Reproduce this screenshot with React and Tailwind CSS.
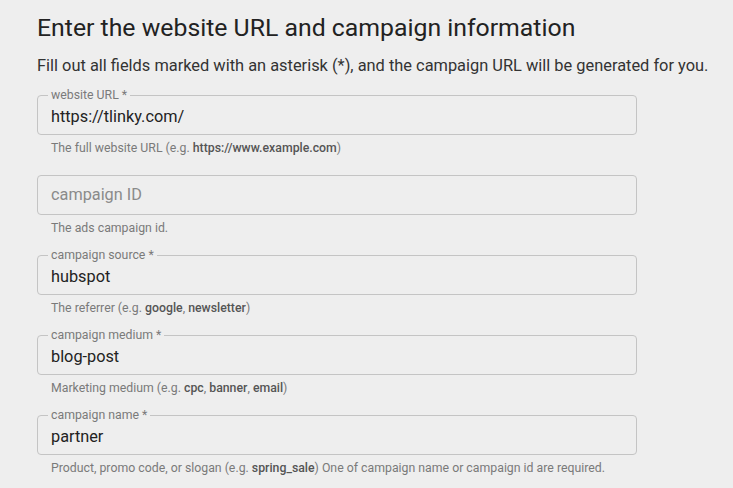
import React from "react";

function Field({ label, value, placeholder, helper }) {
  return (
    <div className="flex flex-col h-[80px]">
      <div className="relative h-[40px] w-[600px] rounded-[4px] border border-[#c4c4c4] flex items-center pl-[13px]">
        {label && (
          <span className="absolute left-[10px] top-[-8px] px-[3px] bg-[#eeeeee] text-[12.3px] leading-[14px] text-[#7a7a7a]">
            {label}
          </span>
        )}
        {value ? (
          <span className="text-[16.3px] leading-[20px] text-[#222222] pt-[4px]">{value}</span>
        ) : (
          <span className="text-[16.3px] leading-[20px] text-[#8a8a8a]">{placeholder}</span>
        )}
      </div>
      <div className="pl-[14px] mt-[4px] text-[12.3px] leading-[18px] text-[#7a7a7a]">{helper}</div>
    </div>
  );
}

const B = ({ children }) => <span className="font-medium text-[#555555]">{children}</span>;

export default function App() {
  return (
    <div
      className="w-[733px] h-[488px] bg-[#eeeeee] overflow-hidden pl-[37px]"
      style={{ fontFamily: "Roboto, 'Noto Sans', sans-serif" }}
    >
      <h1 className="mt-[12px] text-[24.8px] leading-[32px] text-[#222222] font-normal">
        Enter the website URL and campaign information
      </h1>
      <p className="mt-[10px] text-[16.4px] leading-[24px] text-[#333333]">
        Fill out all fields marked with an asterisk (*), and the campaign URL will be generated for you.
      </p>
      <div className="mt-[17px] flex flex-col">
        <Field
          label="website URL *"
          value="https://tlinky.com/"
          helper={<>The full website URL (e.g. <B>https://www.example.com</B>)</>}
        />
        <Field placeholder="campaign ID" helper="The ads campaign id." />
        <Field
          label="campaign source *"
          value="hubspot"
          helper={<>The referrer (e.g. <B>google</B>, <B>newsletter</B>)</>}
        />
        <Field
          label="campaign medium *"
          value="blog-post"
          helper={<>Marketing medium (e.g. <B>cpc</B>, <B>banner</B>, <B>email</B>)</>}
        />
        <Field
          label="campaign name *"
          value="partner"
          helper={
            <>
              Product, promo code, or slogan (e.g. <B>spring_sale</B>) One of campaign name or campaign id are required.
            </>
          }
        />
      </div>
    </div>
  );
}
